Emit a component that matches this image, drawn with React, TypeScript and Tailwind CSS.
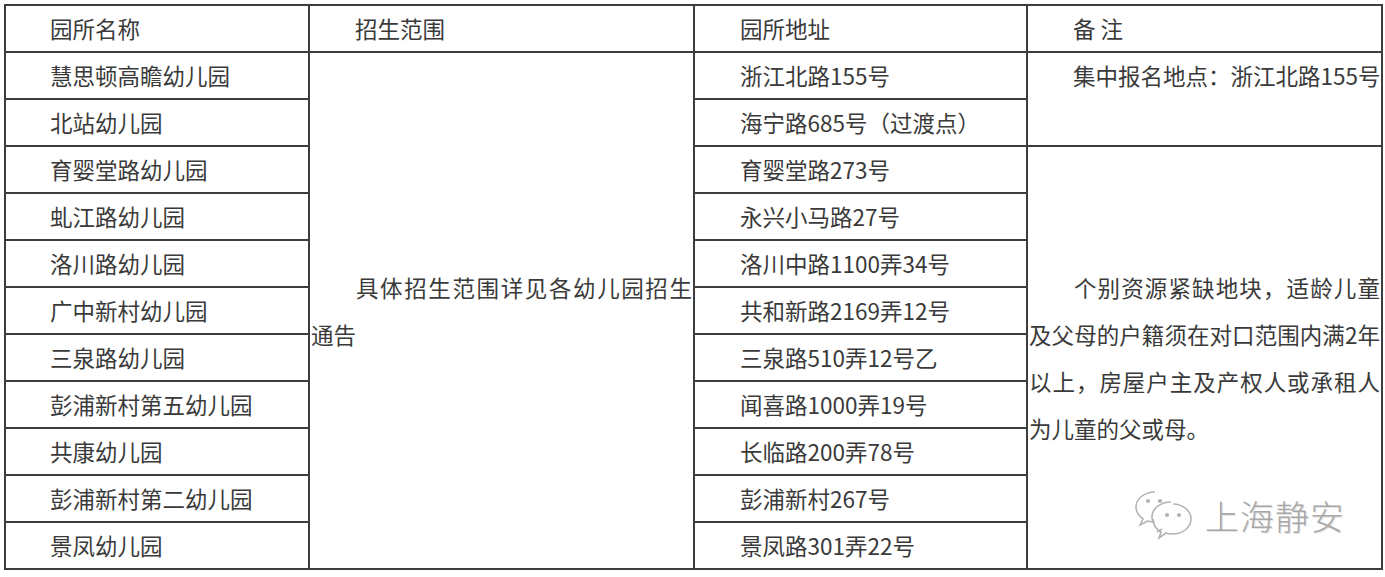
import React from 'react';

const rows = [
    { name: '慧思顿高瞻幼儿园', addr: '浙江北路155号' },
    { name: '北站幼儿园', addr: '海宁路685号（过渡点）' },
    { name: '育婴堂路幼儿园', addr: '育婴堂路273号' },
    { name: '虬江路幼儿园', addr: '永兴小马路27号' },
    { name: '洛川路幼儿园', addr: '洛川中路1100弄34号' },
    { name: '广中新村幼儿园', addr: '共和新路2169弄12号' },
    { name: '三泉路幼儿园', addr: '三泉路510弄12号乙' },
    { name: '彭浦新村第五幼儿园', addr: '闻喜路1000弄19号' },
    { name: '共康幼儿园', addr: '长临路200弄78号' },
    { name: '彭浦新村第二幼儿园', addr: '彭浦新村267号' },
    { name: '景凤幼儿园', addr: '景凤路301弄22号' },
];

const cell = 'border-2 border-[#3d3d3d] h-[45px] leading-[45px] p-0 align-middle';
const justifyLine = 'whitespace-nowrap leading-[47px] text-justify [text-align-last:justify]';

function WeChatMark() {
    return (
        <div className="absolute left-[1133px] top-[488px] flex items-center gap-[8px] pointer-events-none">
            <svg width="64" height="56" viewBox="0 0 64 56" fill="none" stroke="#b4b4b4" strokeWidth="1.6">
                <path d="M22 4C11 4 3 11 3 19c0 5 3 9 7 12l-3 6 8-4c2 1 5 1 7 1" />
                <path d="M20 34c-1-2-1-3-1-5 0-9 9-15 19-15" />
                <path d="M40 16c10 0 18 7 18 15s-8 15-18 15c-3 0-5 0-7-1l-7 5 2-6c-5-3-8-8-8-13" />
                <path d="M29 41l-5 3" />
                <circle cx="15" cy="13" r="1.3" fill="#b4b4b4" />
                <circle cx="27" cy="13" r="1.3" fill="#b4b4b4" />
                <circle cx="34" cy="27" r="1.3" fill="#b4b4b4" />
                <circle cx="46" cy="27" r="1.3" fill="#b4b4b4" />
            </svg>
            <span className="text-[34px] leading-none tracking-[1px] text-[#a8a8a8] font-light [text-shadow:1px_1px_0_#e4e4e4]">
                上海静安
            </span>
        </div>
    );
}

export default function App() {
    return (
        <div
            className="relative w-[1385px] h-[577px] bg-white pl-[4px] pt-[4px] text-[#3a3a3a] text-[22.5px]"
            style={{ fontFamily: '"Noto Sans CJK SC", "Noto Sans", sans-serif' }}
        >
            <table className="border-collapse table-fixed w-[1377px]">
                <colgroup>
                    <col className="w-[304px]" />
                    <col className="w-[385px]" />
                    <col className="w-[333px]" />
                    <col className="w-[355px]" />
                </colgroup>
                <tbody>
                    <tr>
                        <td className={`${cell} pl-[44px]`}>园所名称</td>
                        <td className={`${cell} pl-[45px]`}>招生范围</td>
                        <td className={`${cell} pl-[45px]`}>园所地址</td>
                        <td className={`${cell} pl-[45px]`}>备&nbsp;注</td>
                    </tr>
                    {rows.map((r, i) => (
                        <tr key={r.name}>
                            <td className={`${cell} pl-[44px] whitespace-nowrap`}>{r.name}</td>
                            {i === 0 && (
                                <td rowSpan={11} className={`${cell} px-[1px]`}>
                                    <div className={`${justifyLine} pl-[45px]`}>具体招生范围详见各幼儿园招生</div>
                                    <div className="leading-[47px]">通告</div>
                                </td>
                            )}
                            <td className={`${cell} pl-[45px] whitespace-nowrap`}>{r.addr}</td>
                            {i === 0 && (
                                <td rowSpan={2} className={`${cell} align-top pl-[45px] whitespace-nowrap`}>
                                    集中报名地点：浙江北路155号
                                </td>
                            )}
                            {i === 2 && (
                                <td rowSpan={9} className={`${cell} px-[1px]`}>
                                    <div className={`${justifyLine} pl-[45px]`}>个别资源紧缺地块，适龄儿童</div>
                                    <div className={justifyLine}>及父母的户籍须在对口范围内满2年</div>
                                    <div className={justifyLine}>以上，房屋户主及产权人或承租人</div>
                                    <div className="leading-[47px]">为儿童的父或母。</div>
                                </td>
                            )}
                        </tr>
                    ))}
                </tbody>
            </table>
            <WeChatMark />
        </div>
    );
}
